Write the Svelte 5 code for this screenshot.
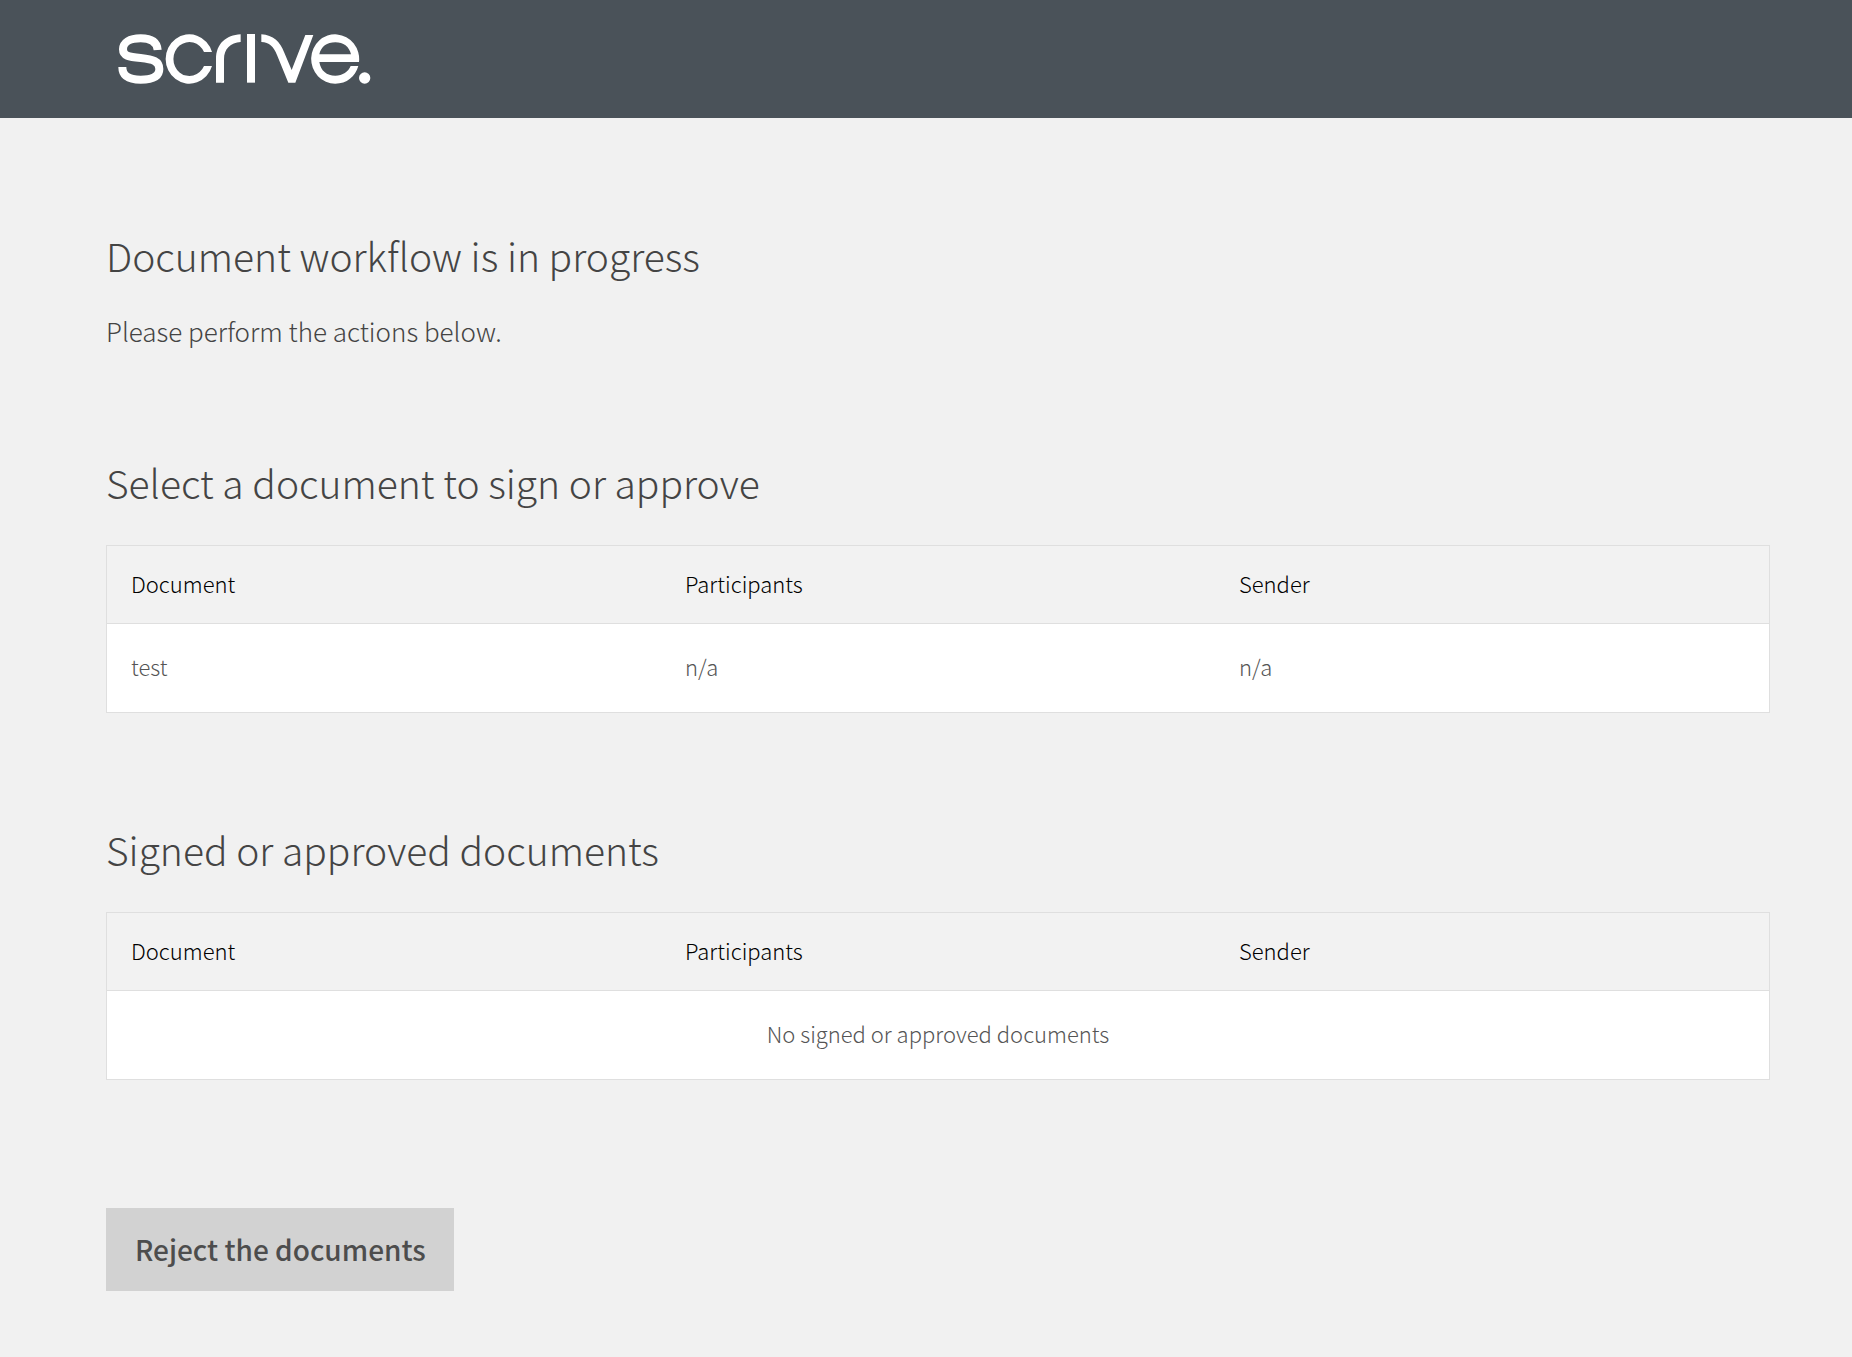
<script>
  const columns = ['Document', 'Participants', 'Sender'];

  const sections = [
    {
      id: 'pending',
      title: 'Select a document to sign or approve',
      rows: [{ title: 'test', participants: 'n/a', sender: 'n/a' }],
      empty: 'No documents to sign or approve'
    },
    {
      id: 'completed',
      title: 'Signed or approved documents',
      rows: [],
      empty: 'No signed or approved documents'
    }
  ];
</script>

<header class="header">
  <svg class="logo" viewBox="54 42 762 150" role="img" aria-label="Scrive">
    <path class="line" d="M173 90C171 67 155 55 122 55C88 55 69 68 69 88C69 108 86 111 122 114C160 118 178 124 178 147C178 169 158 179 122 179C86 179 67 168 67 141" />
    <path d="M336 96A71 74 0 1 0 336 138H312A48 51 0 1 1 312 96Z" />
    <path d="M348 188V117C348 72 378 45 422 43V66C392 68 372 86 372 118V188Z" />
    <path d="M441 42H465V188H441Z" />
    <path d="M484 43C520 45 540 66 552 96L575 150L616 45H640L586 188H565L531 105C521 80 508 67 484 66Z" />
    <path fill-rule="evenodd" d="M777 126H658C662 152 680 167 706 167C728 167 745 155 752 138H775C766 170 740 191 706 191A72 74 0 1 1 777 126ZM658 103H753C748 80 730 67 706 67C681 67 663 80 658 103Z" />
    <circle cx="794" cy="174" r="17" />
  </svg>
</header>

<main class="content">
  <h1>Document workflow is in progress</h1>
  <p class="intro">Please perform the actions below.</p>

  {#each sections as section (section.id)}
    <section>
      <h2 id={section.id}>{section.title}</h2>
      <table aria-labelledby={section.id}>
        <thead>
          <tr>
            {#each columns as column}
              <th scope="col">{column}</th>
            {/each}
          </tr>
        </thead>
        <tbody>
          {#each section.rows as row}
            <tr>
              <td>{row.title}</td>
              <td>{row.participants}</td>
              <td>{row.sender}</td>
            </tr>
          {:else}
            <tr>
              <td class="empty" colspan={columns.length}>{section.empty}</td>
            </tr>
          {/each}
        </tbody>
      </table>
    </section>
  {/each}

  <button type="button" class="reject">Reject the documents</button>
</main>

<style>
  :global(body) {
    margin: 0;
    background-color: #f1f1f1;
    color: #444444;
    font-family: 'Noto Sans CJK SC', 'Noto Sans', sans-serif;
    font-weight: 300;
  }

  .header {
    padding: 34px 118px;
    background-color: #4a5259;
  }

  .logo {
    display: block;
    width: 254px;
    height: 50px;
    fill: #ffffff;
  }

  .logo .line {
    fill: none;
    stroke: #ffffff;
    stroke-width: 24;
  }

  .content {
    padding: 113px 82px 66px 106px;
  }

  h1,
  h2 {
    margin: 0;
    font-size: 39px;
    line-height: 48px;
    font-weight: 300;
  }

  .intro {
    margin: 32px 0 107px;
    font-size: 26px;
    line-height: 40px;
  }

  section + section {
    margin-top: 112px;
  }

  h2 {
    margin-bottom: 39px;
  }

  table {
    width: 100%;
    table-layout: fixed;
    border-collapse: separate;
    border-spacing: 0;
    border: 1px solid #dfdfdf;
    background-color: #ffffff;
    font-size: 22px;
    line-height: 32px;
  }

  th,
  td {
    text-align: left;
    font-weight: inherit;
  }

  th {
    padding: 21px 24px 24px;
    border-bottom: 1px solid #dfdfdf;
    background-color: #f2f2f2;
    color: #000000;
  }

  td {
    padding: 26px 24px 30px;
    color: #555555;
  }

  .empty {
    text-align: center;
  }

  .reject {
    display: block;
    margin-top: 128px;
    padding: 21px 28px 22px 29px;
    border: 0;
    background-color: #d2d2d2;
    color: #4d4d4d;
    font-family: inherit;
    font-size: 28px;
    font-weight: 500;
    line-height: 40px;
    cursor: pointer;
  }

  .reject:hover {
    background-color: #c8c8c8;
  }
</style>
